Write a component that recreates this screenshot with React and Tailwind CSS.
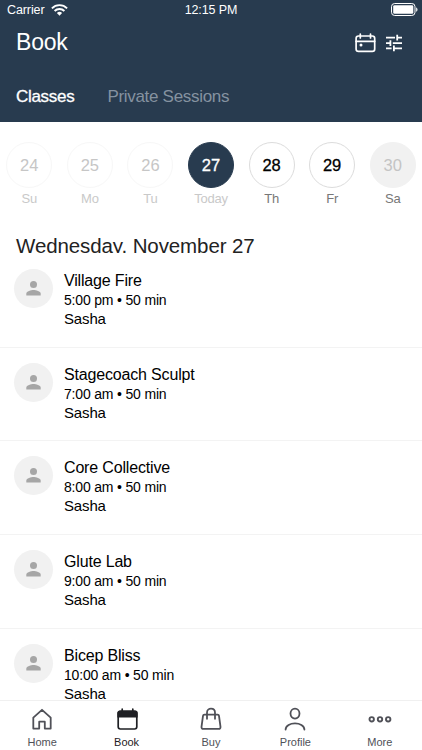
import React, { useState } from 'react';
import clsx from 'clsx';

const days = [
    { date: 24, label: 'Su', state: 'past' },
    { date: 25, label: 'Mo', state: 'past' },
    { date: 26, label: 'Tu', state: 'past' },
    { date: 27, label: 'Today', state: 'open' },
    { date: 28, label: 'Th', state: 'open' },
    { date: 29, label: 'Fr', state: 'open' },
    { date: 30, label: 'Sa', state: 'closed' },
];

const classes = [
    { name: 'Village Fire', time: '5:00 pm', length: '50 min', teacher: 'Sasha' },
    { name: 'Stagecoach Sculpt', time: '7:00 am', length: '50 min', teacher: 'Sasha' },
    { name: 'Core Collective', time: '8:00 am', length: '50 min', teacher: 'Sasha' },
    { name: 'Glute Lab', time: '9:00 am', length: '50 min', teacher: 'Sasha' },
    { name: 'Bicep Bliss', time: '10:00 am', length: '50 min', teacher: 'Sasha' },
];

const WifiIcon = () => (
    <svg width="17" height="12" viewBox="0 0 17 12" fill="none" stroke="currentColor" strokeWidth="1.9">
        <path d="M0.9 4.3a10.8 10.8 0 0 1 15.2 0" />
        <path d="M3.6 7a7 7 0 0 1 9.8 0" />
        <path d="M8.5 11.8L5.9 9.1a3.7 3.7 0 0 1 5.2 0z" fill="currentColor" stroke="none" />
    </svg>
);

const BatteryIcon = () => (
    <svg width="27" height="13" viewBox="0 0 27 13" fill="none">
        <rect x="0.5" y="0.5" width="23.5" height="12" rx="3.2" stroke="currentColor" />
        <rect x="2.2" y="2.2" width="20.1" height="8.6" rx="1.4" fill="currentColor" />
        <path d="M25.2 4.4c1.7.5 1.7 3.7 0 4.2z" fill="currentColor" />
    </svg>
);

const CalendarIcon = () => (
    <svg width="21" height="20" viewBox="0 0 21 20" fill="none" stroke="currentColor" strokeWidth="1.7" strokeLinecap="round">
        <rect x="1.1" y="3" width="18.6" height="15.4" rx="2.4" />
        <path d="M1.1 8.3h18.6M5.3 1v4M15.5 1v4" />
        <circle cx="6" cy="12" r="1.5" fill="currentColor" stroke="none" />
    </svg>
);

const FilterIcon = () => (
    <svg width="18" height="18" viewBox="0 0 18 18" fill="none" stroke="currentColor" strokeWidth="1.8">
        <path d="M1 3.7h9M12 3.7h5M12.2 0.8v5.6M1 9.1h4.6M7.8 9.1H17M5.4 6.3v5.6M1 14.4h5.6M8.8 14.4H17M8.9 11.6v5.6" />
    </svg>
);

const PersonIcon = () => (
    <svg width="15" height="15" viewBox="0 0 15 15" fill="#a6a6a6">
        <circle cx="7.5" cy="3.6" r="3.5" />
        <path d="M0.3 14.6v-1.9c0-2.5 4.8-3.7 7.2-3.7s7.2 1.2 7.2 3.7v1.9z" />
    </svg>
);

const HomeIcon = () => (
    <svg width="24" height="24" viewBox="0 0 24 24" fill="none" stroke="currentColor" strokeWidth="1.8" strokeLinejoin="round">
        <path d="M3.3 21.6V10.7L12 2.8l8.7 7.9v10.9h-5.9v-6.9H9.2v6.9z" />
    </svg>
);

const BookIcon = () => (
    <svg width="24" height="24" viewBox="0 0 24 24" fill="none" stroke="currentColor" strokeWidth="1.7">
        <rect x="3.2" y="4.4" width="18.6" height="17.6" rx="2.2" />
        <path d="M3.2 6c0-1 .7-1.6 1.7-1.6h15.2c1 0 1.7.6 1.7 1.6v3.6H3.2z" fill="currentColor" />
        <path d="M7.2 2.2v3M17.8 2.2v3" strokeLinecap="round" />
    </svg>
);

const BagIcon = () => (
    <svg width="24" height="24" viewBox="0 0 24 24" fill="none" stroke="currentColor" strokeWidth="1.8" strokeLinecap="round" strokeLinejoin="round">
        <path d="M5.4 7.7h13.2c.8 0 1.3.5 1.4 1.2l1.5 11c.1 1.2-.6 2-1.7 2H4.2c-1.1 0-1.8-.8-1.7-2l1.5-11c.1-.7.6-1.2 1.4-1.2z" />
        <path d="M8 11.8V5.7c0-5.4 8-5.4 8 0v6.1" />
    </svg>
);

const ProfileIcon = () => (
    <svg width="24" height="24" viewBox="0 0 24 24" fill="none" stroke="currentColor" strokeWidth="1.8" strokeLinecap="round">
        <ellipse cx="12" cy="6.6" rx="4.5" ry="5" />
        <path d="M2.6 22.6c.2-8.3 18.6-8.3 18.8 0" />
    </svg>
);

const MoreIcon = () => (
    <svg width="24" height="24" viewBox="0 0 24 24" fill="none" stroke="currentColor" strokeWidth="1.9">
        <circle cx="3.7" cy="12.3" r="2.2" />
        <circle cx="12" cy="12.3" r="2.2" />
        <circle cx="20.2" cy="12.3" r="2.2" />
    </svg>
);

const navItems = [
    { label: 'Home', Icon: HomeIcon },
    { label: 'Book', Icon: BookIcon },
    { label: 'Buy', Icon: BagIcon },
    { label: 'Profile', Icon: ProfileIcon },
    { label: 'More', Icon: MoreIcon },
];

const DayButton = ({ day, selected, onSelect }) => (
    <button type="button" onClick={onSelect} className="flex flex-col items-center">
        <span
            className={clsx(
                'flex size-[46px] items-center justify-center rounded-full border text-[16.5px]',
                selected && 'border-[#283b4f] bg-[#283b4f] text-white [-webkit-text-stroke:0.3px]',
                !selected && day.state === 'past' && 'border-[#f7f7f7] text-[#c6c6c6]',
                !selected && day.state === 'open' && 'border-[#dcdcdc] text-black [-webkit-text-stroke:0.3px]',
                !selected && day.state === 'closed' && 'border-[#f1f1f1] bg-[#f1f1f1] text-[#c4c4c4]'
            )}
        >
            {day.date}
        </span>
        <span
            className={clsx(
                'mt-[3px] text-[13px] leading-4 tracking-[-0.2px]',
                day.state === 'past' || selected ? 'text-[#c9c9c9]' : 'text-[#777777]'
            )}
        >
            {day.label}
        </span>
    </button>
);

const ClassRow = ({ item }) => (
    <li className="flex h-[93.7px] shrink-0 gap-[11px] border-b border-[#f3f3f3] pl-3.5 pt-[15px]">
        <div className="flex size-[39px] shrink-0 items-center justify-center rounded-full bg-[#f1f1f1]">
            <PersonIcon />
        </div>
        <div className="text-black">
            <h3 className="pt-px text-base leading-[22px] tracking-[-0.17px]">{item.name}</h3>
            <p className="-mt-px text-[14px] leading-[18px] tracking-[-0.18px]">{item.time} • {item.length}</p>
            <p className="text-[15px] leading-[19px] tracking-[-0.15px]">{item.teacher}</p>
        </div>
    </li>
);

const App = () => {
    const [selectedDate, setSelectedDate] = useState(27);
    const [activeTab, setActiveTab] = useState('Book');

    return (
        <div className="flex h-[750px] w-[422px] flex-col overflow-hidden bg-white font-['Liberation_Sans',Arial,sans-serif]">
            <header className="h-[122px] shrink-0 bg-[#283b4f] text-white">
                <div className="grid h-[19px] grid-cols-[1fr_auto_1fr] items-center pl-[7px] pr-1 text-[12.5px] leading-[18px] tracking-[-0.1px]">
                    <div className="flex items-center gap-[6px]">
                        <span className="pt-px">Carrier</span>
                        <WifiIcon />
                    </div>
                    <span className="pr-[3px]">12:15 PM</span>
                    <div className="flex justify-end">
                        <BatteryIcon />
                    </div>
                </div>
                <div className="flex h-[47px] items-center justify-between pl-4 pr-[19px]">
                    <h1 className="text-[23px] tracking-[-0.2px]">Book</h1>
                    <div className="flex items-center gap-[9px]">
                        <CalendarIcon />
                        <FilterIcon />
                    </div>
                </div>
                <div className="flex h-14 items-center gap-[33px] pl-4 pt-[5px] text-[17px] tracking-[-0.3px]">
                    <button type="button" className="[-webkit-text-stroke:0.3px]">Classes</button>
                    <button type="button" className="text-[#8592a0]">Private Sessions</button>
                </div>
            </header>

            <div className="-mx-px grid shrink-0 grid-cols-7 pt-5">
                {days.map((day) => (
                    <DayButton
                        key={day.date}
                        day={day}
                        selected={day.date === selectedDate}
                        onSelect={() => setSelectedDate(day.date)}
                    />
                ))}
            </div>

            <div className="mb-px mt-[27px] h-[19px] shrink-0 overflow-hidden pl-4">
                <h2 className="text-[20.5px] leading-6 tracking-[-0.1px] text-[#222222]">Wednesday, November 27</h2>
            </div>

            <ul className="flex min-h-0 flex-1 flex-col overflow-hidden">
                {classes.map((item) => (
                    <ClassRow key={item.name} item={item} />
                ))}
            </ul>

            <nav className="grid h-[50px] shrink-0 grid-cols-5 border-t border-[#f0f0f0] bg-white">
                {navItems.map(({ label, Icon }) => (
                    <button
                        key={label}
                        type="button"
                        onClick={() => setActiveTab(label)}
                        className={clsx(
                            'flex flex-col items-center pt-[6px]',
                            activeTab === label ? 'text-[#1f2024]' : 'text-[#505158]'
                        )}
                    >
                        <Icon />
                        <span className="mt-[3px] text-[11px] leading-4">{label}</span>
                    </button>
                ))}
            </nav>
        </div>
    );
};

export default App;
